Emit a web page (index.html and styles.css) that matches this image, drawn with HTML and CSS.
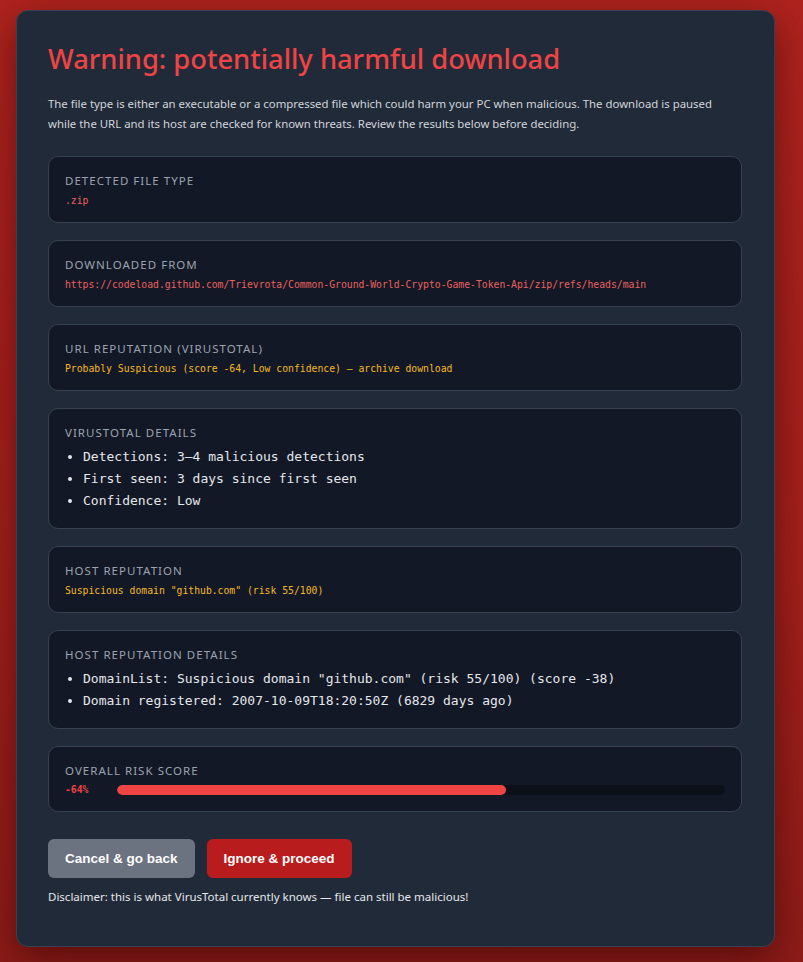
FILE: index.html
```html
<!DOCTYPE html>
<html lang="en">
<head>
<meta charset="utf-8">
<title>Warning: potentially harmful download</title>
<link rel="stylesheet" href="styles.css">
</head>
<body>
<main class="dialog">
  <h1 class="dialog-title">Warning: potentially harmful download</h1>
  <p class="dialog-intro">The file type is either an executable or a compressed file which could harm your PC when malicious. The download is paused while the URL and its host are checked for known threats. Review the results below before deciding.</p>

  <section class="info-box">
    <div class="info-label">Detected file type</div>
    <div class="info-value value-danger">.zip</div>
  </section>

  <section class="info-box">
    <div class="info-label">Downloaded from</div>
    <div class="info-value value-danger">https://codeload.github.com/Trievrota/Common-Ground-World-Crypto-Game-Token-Api/zip/refs/heads/main</div>
  </section>

  <section class="info-box">
    <div class="info-label">URL reputation (VirusTotal)</div>
    <div class="info-value value-warn">Probably Suspicious (score -64, Low confidence) — archive download</div>
  </section>

  <section class="info-box">
    <div class="info-label">VirusTotal details</div>
    <ul class="info-list">
      <li>Detections: 3–4 malicious detections</li>
      <li>First seen: 3 days since first seen</li>
      <li>Confidence: Low</li>
    </ul>
  </section>

  <section class="info-box">
    <div class="info-label">Host reputation</div>
    <div class="info-value value-warn">Suspicious domain "github.com" (risk 55/100)</div>
  </section>

  <section class="info-box">
    <div class="info-label">Host reputation details</div>
    <ul class="info-list">
      <li>DomainList: Suspicious domain "github.com" (risk 55/100) (score -38)</li>
      <li>Domain registered: 2007-10-09T18:20:50Z (6829 days ago)</li>
    </ul>
  </section>

  <section class="info-box">
    <div class="info-label">Overall risk score</div>
    <div class="risk-row">
      <span class="risk-percent">-64%</span>
      <div class="risk-track"><div class="risk-fill" style="width: 64%"></div></div>
    </div>
  </section>

  <div class="actions">
    <button class="btn btn-cancel" type="button">Cancel &amp; go back</button>
    <button class="btn btn-proceed" type="button">Ignore &amp; proceed</button>
  </div>
  <p class="disclaimer">Disclaimer: this is what VirusTotal currently knows — file can still be malicious!</p>
</main>
</body>
</html>
```

FILE: styles.css
```css
html, body {
  height: 100%;
}

body {
  margin: 0;
  padding: 10px 16px 16px;
  box-sizing: border-box;
  background: linear-gradient(180deg, #b0231e 0%, #a3201c 60%, #8e1c18 100%);
  font-family: "Noto Sans", "Open Sans", sans-serif;
}

.dialog {
  width: 759px;
  box-sizing: border-box;
  padding: 30px 32px 42px 31px;
  background: #212a39;
  border: 1px solid #374151;
  border-radius: 12px;
  box-shadow: 0 12px 40px rgba(40, 0, 0, 0.55);
}

.dialog-title {
  margin: 0 0 17px;
  font-size: 27.3px;
  line-height: 36px;
  font-weight: 500;
  color: #ef4444;
}

.dialog-intro {
  margin: 0 0 22px;
  font-size: 11.4px;
  line-height: 20px;
  color: #d1d5db;
}

.info-box {
  margin-bottom: 17px;
  padding: 16px 16px;
  background: #121826;
  border: 1px solid #374151;
  border-radius: 10px;
}

.info-label {
  font-size: 11.5px;
  line-height: 16px;
  letter-spacing: 0.09em;
  text-transform: uppercase;
  color: #9ca3af;
}

.info-value {
  margin-top: 6px;
  font-family: "DejaVu Sans Mono", monospace;
  font-size: 9.75px;
  line-height: 11px;
  white-space: nowrap;
}

.value-danger {
  color: #e8625f;
}

.value-warn {
  color: #f5b921;
}

.info-list {
  margin: 5px 0 0;
  padding-left: 18px;
  font-family: "DejaVu Sans Mono", monospace;
  font-size: 13px;
  line-height: 22px;
  color: #e5e7eb;
}

.risk-row {
  display: flex;
  align-items: center;
  gap: 12px;
  margin-top: 6px;
}

.risk-percent {
  width: 40px;
  font-family: "DejaVu Sans Mono", monospace;
  font-size: 9.75px;
  line-height: 10px;
  font-weight: 700;
  color: #ef4444;
}

.risk-track {
  flex: 1;
  height: 10px;
  background: #0c1018;
  border-radius: 5px;
  overflow: hidden;
}

.risk-fill {
  height: 100%;
  background: #ef4444;
  border-radius: 5px;
}

.actions {
  display: flex;
  gap: 12px;
  margin-top: 27px;
}

.btn {
  height: 39px;
  padding: 0 17px;
  border: none;
  border-radius: 6px;
  font-family: "Liberation Sans", Arial, sans-serif;
  font-size: 13.5px;
  font-weight: 700;
  color: #ffffff;
}

.btn-cancel {
  background: #6b7280;
}

.btn-proceed {
  background: #b91c1c;
}

.disclaimer {
  margin: 12px 0 0;
  font-size: 11.5px;
  line-height: 14px;
  color: #e5e7eb;
}
```
